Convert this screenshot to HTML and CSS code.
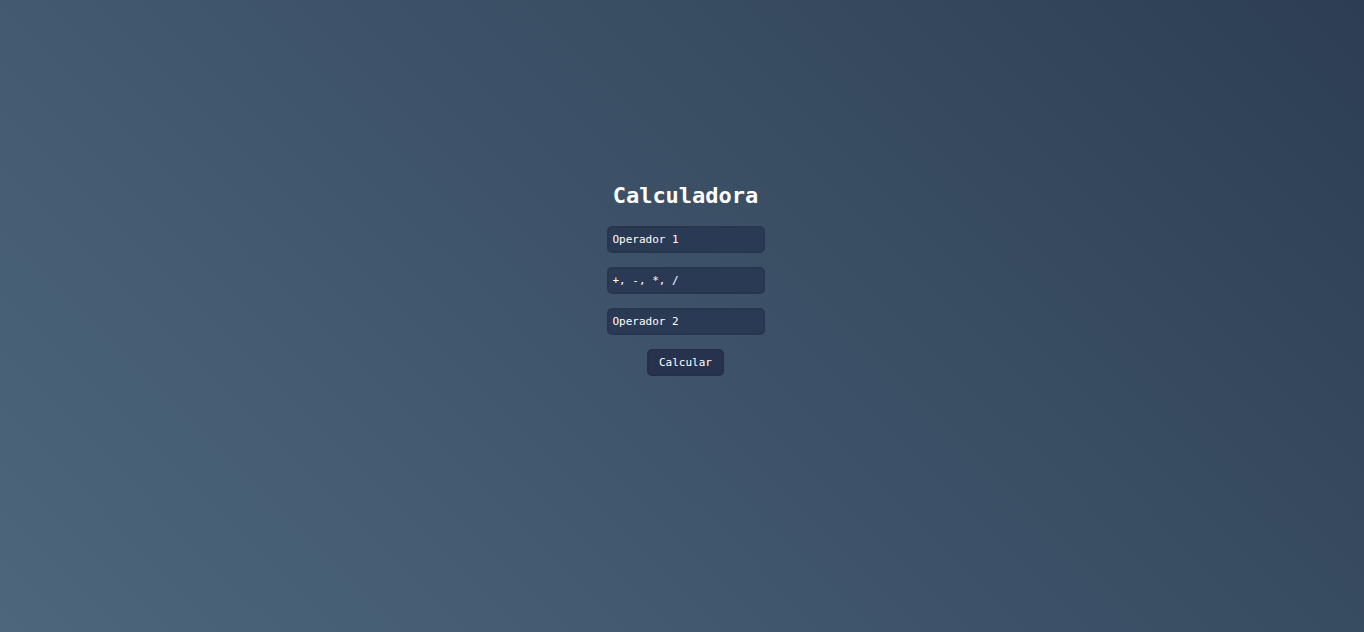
FILE: index.html
```html
<!DOCTYPE html>
<html lang="es">
<head>
  <meta charset="utf-8">
  <meta name="viewport" content="width=device-width, initial-scale=1">
  <title>Calculadora</title>
  <link rel="stylesheet" href="styles.css">
</head>
<body>
  <main class="page">
    <form class="calculator">
      <h1 class="title">Calculadora</h1>
      <input class="field" type="text" placeholder="Operador 1" aria-label="Operador 1">
      <input class="field" type="text" placeholder="+, -, *, /" aria-label="Operación">
      <input class="field" type="text" placeholder="Operador 2" aria-label="Operador 2">
      <button class="submit" type="button">Calcular</button>
    </form>
  </main>
</body>
</html>
```

FILE: styles.css
```css
* {
  box-sizing: border-box;
}

body {
  margin: 0;
  font-family: "DejaVu Sans Mono", monospace;
  color: #fff;
}

.page {
  display: flex;
  align-items: center;
  justify-content: center;
  min-height: 100vh;
  padding: 0 0 74px 7px;
  background: linear-gradient(45deg, #4d667c, #2d3e54);
}

.calculator {
  display: flex;
  flex-direction: column;
  align-items: center;
  gap: 14px;
}

.title {
  margin: 0 0 2px;
  font-size: 22px;
  line-height: 28px;
}

.field,
.submit {
  height: 27px;
  border: 2px solid #27364e;
  border-radius: 5px;
  font-family: inherit;
  font-size: 11px;
  color: #fff;
}

.field {
  width: 158px;
  padding: 0 4px;
  background: #2b3a54;
}

.field::placeholder {
  color: #fff;
  opacity: 1;
}

.submit {
  padding: 0 10px;
  border-color: #252f49;
  background: #27324e;
}
```
